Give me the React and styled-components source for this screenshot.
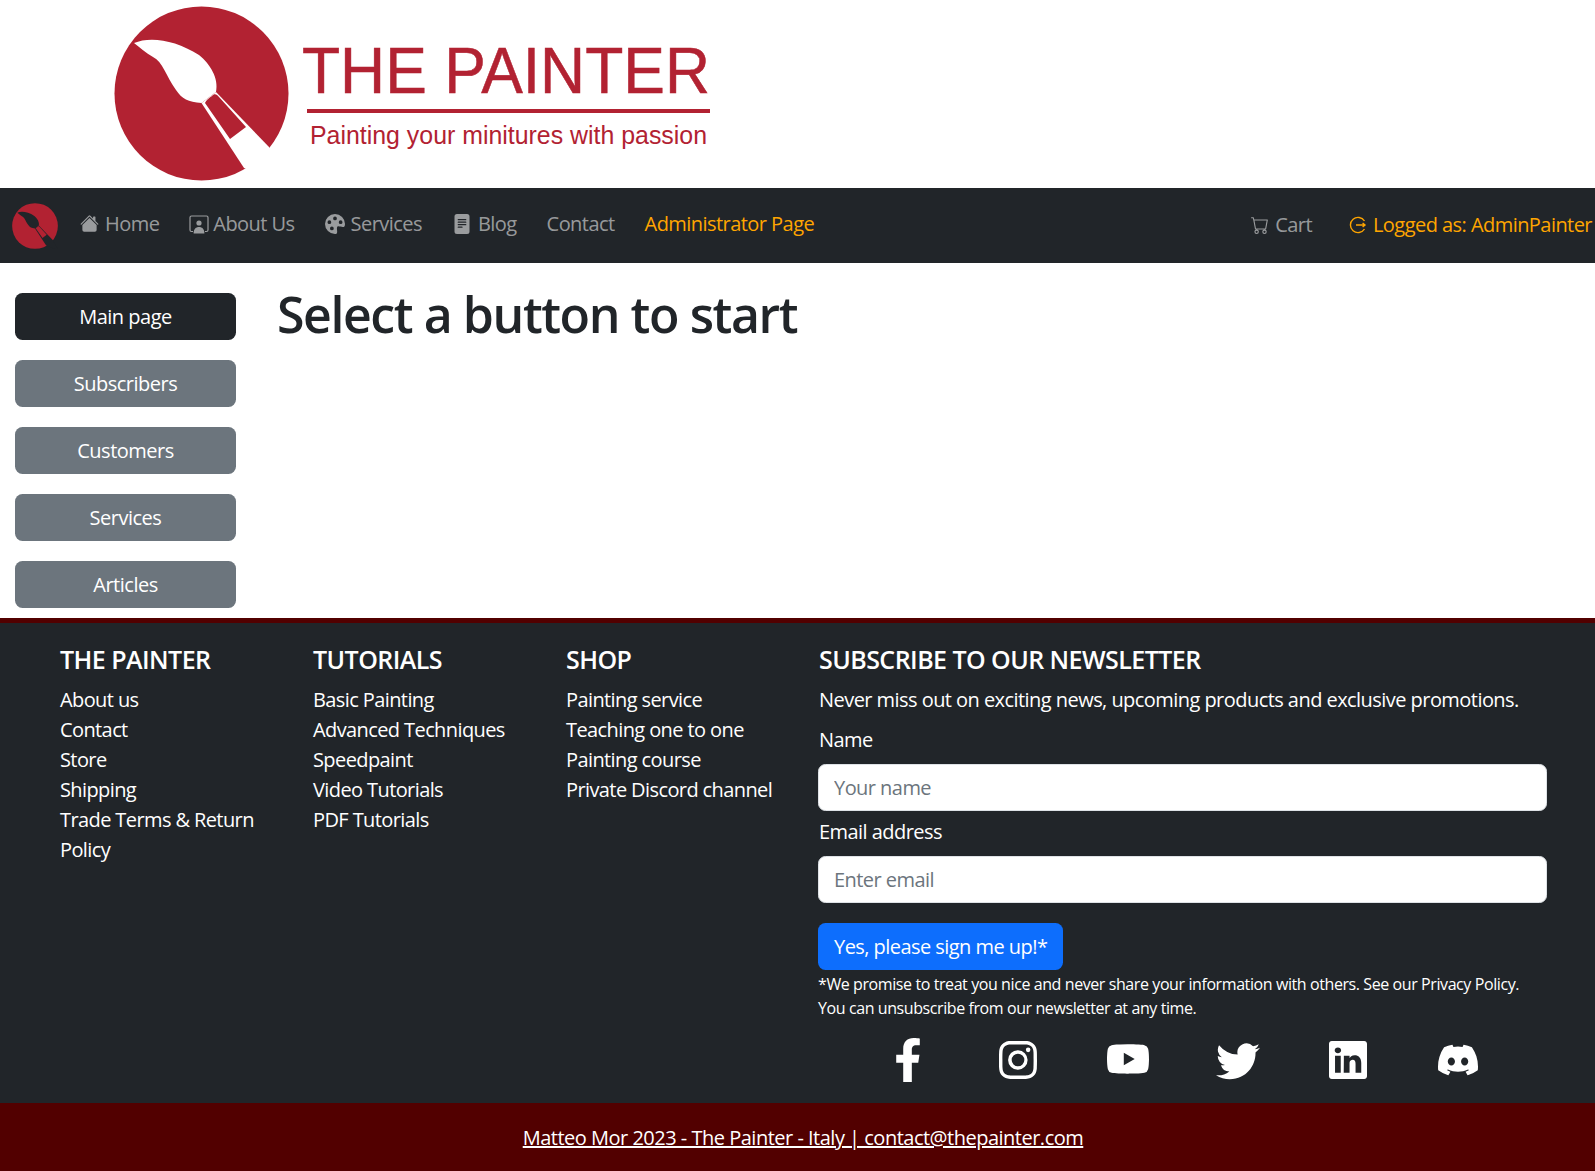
import styled, { createGlobalStyle } from "styled-components"
import { BsHouseFill, BsPaletteFill, BsFileTextFill, BsCart, BsInstagram, BsYoutube, BsTwitter, BsLinkedin, BsDiscord } from "react-icons/bs"
import { FaFacebookF } from "react-icons/fa"

const GlobalStyle = createGlobalStyle`
  html, body {
    margin: 0;
    padding: 0;
    background: #fff;
    font-family: "Open Sans", "Noto Sans", sans-serif;
    font-size: 20px;
    line-height: 1.5;
    color: #212529;
  }
  * {
    box-sizing: border-box;
  }
`
const Banner = styled.header`
  height: 188px;
  padding-left: 114px;
  display: flex;
  align-items: flex-start;
`
const LogoArt = styled.svg`
  display: block;
  width: 640px;
  height: 188px;
`
const EmblemArt = styled.svg`
  display: block;
  width: 46px;
  height: 46px;
  flex: none;
`
const NavBar = styled.nav`
  height: 75px;
  background: #212529;
  display: flex;
  align-items: center;
  padding-left: 12px;
`
const NavList = styled.div`
  display: flex;
  align-items: center;
  margin-left: 7px;
  padding-bottom: 4px;
  letter-spacing: -0.55px;
`
const NavLink = styled.a`
  display: flex;
  align-items: center;
  gap: ${props => props.$gap || 6}px;
  padding: 0 15px;
  color: ${props => (props.$accent ? "#ffa500" : "rgba(255, 255, 255, 0.55)")};
  white-space: nowrap;
  svg {
    flex: none;
  }
`
const NavRight = styled(NavList)`
  margin-left: auto;
  margin-right: -12px;
  padding-bottom: 1px;
  gap: 7px;
`
const Content = styled.main`
  display: flex;
  padding: 30px 0 10px 15px;
  gap: 41px;
`
const SideMenu = styled.aside`
  width: 221px;
  display: flex;
  flex-direction: column;
  gap: 20px;
`
const SideButton = styled.button`
  height: 47px;
  border: 0;
  border-radius: 7.5px;
  background: ${props => (props.$active ? "#212529" : "#6c757d")};
  color: #fff;
  font: inherit;
  letter-spacing: -0.5px;
`
const Title = styled.h1`
  margin: -9px 0 0;
  font-size: 50px;
  font-weight: 600;
  line-height: 60px;
  letter-spacing: -1.42px;
`
const Footer = styled.footer`
  background: #212529;
  border-top: 5px solid #520000;
  height: 485px;
  padding: 21px 48px 0 60px;
  display: grid;
  grid-template-columns: 253px 253px 253px 1fr;
  color: #fff;
  letter-spacing: -0.55px;
`
const ColTitle = styled.h5`
  margin: 0 0 11px;
  font-size: 25px;
  font-weight: 600;
  line-height: 30px;
  letter-spacing: -0.55px;
`
const LinkList = styled.div`
  display: flex;
  flex-direction: column;
  padding-right: 50px;
  letter-spacing: -0.6px;
  a {
    color: #fff;
  }
  &.wide {
    padding-right: 0;
    white-space: nowrap;
  }
`
const Lead = styled.p`
  margin: 0 0 10px;
  white-space: nowrap;
`
const FieldLabel = styled.label`
  display: block;
  margin-bottom: 9px;
`
const Field = styled.input`
  display: block;
  width: 729px;
  height: 47px;
  padding: 0 15px;
  margin: 0 0 ${props => props.$mb}px -1px;
  border: 1px solid #dee2e6;
  border-radius: 7.5px;
  background: #fff;
  font: inherit;
  letter-spacing: -0.55px;
  &::placeholder {
    color: #6c757d;
    opacity: 1;
  }
`
const SubmitButton = styled.button`
  display: block;
  height: 47px;
  margin-left: -1px;
  padding: 0 16px;
  border: 0;
  border-radius: 7.5px;
  background: #0d6efd;
  color: #fff;
  font: inherit;
  letter-spacing: -0.55px;
`
const Fineprint = styled.p`
  margin: 2px 0 0 -1px;
  font-size: 16px;
  line-height: 24px;
  letter-spacing: -0.41px;
  white-space: nowrap;
`
const SocialRow = styled.div`
  margin-top: 17px;
  padding-left: 34px;
  display: grid;
  grid-template-columns: repeat(6, 110px);
  justify-items: center;
  align-items: center;
  height: 46px;
  color: #fff;
`
const BottomBar = styled.div`
  height: 68px;
  background: #520000;
  display: flex;
  align-items: center;
  justify-content: center;
  padding: 2px 0 0 11px;
  letter-spacing: -0.5px;
  a {
    color: #fff;
    text-decoration: underline;
  }
`

// emblem coordinates are in banner pixels
const Emblem = ({ brush }) => (
  <>
    <circle cx="201.5" cy="93.5" r="87" fill="#b22232" />
    <path fill={brush} d="M134 43C150 36 176 40 199 55C210 64 219 78 216 92L201.5 103C188 102 182 99 176 90C166 76 163 62 153 57C146 53 139 47 134 43Z" />
    <path fill={brush} d="M216 92L269 147L290 185L244 168L201.5 103Z" />
    <path fill="#b22232" d="M212 96C214 93 217 94 219 97L246 127L230 139L205 103C206 100 209 98 212 96Z" />
  </>
)

const Logo = () => (
  <LogoArt viewBox="114 0 640 188">
    <Emblem brush="#fff" />
    <text x="302" y="93" fill="#b22232" stroke="#b22232" strokeWidth="0.5" fontFamily="Liberation Sans" fontSize="65" textLength="408" lengthAdjust="spacingAndGlyphs">THE PAINTER</text>
    <rect x="307" y="109" width="403" height="4" fill="#b22232" />
    <text x="310" y="144" fill="#b22232" fontFamily="Liberation Sans" fontSize="25" textLength="397" lengthAdjust="spacingAndGlyphs">Painting your minitures with passion</text>
  </LogoArt>
)

const LogoutGlyph = () => (
  <svg width="18" height="18" viewBox="0 0 18 18" fill="none" stroke="currentColor" strokeWidth="1.4">
    <path d="M15.5 5A7.6 7.6 0 1 0 15.5 13" />
    <path d="M7 9H16M13.6 7L16 9L13.6 11" />
  </svg>
)

const PersonFrameGlyph = () => (
  <svg width="20" height="20" viewBox="0 0 20 20" fill="none">
    <path stroke="currentColor" strokeWidth="1.2" d="M4 17.5H2.5A1.5 1.5 0 0 1 1 16V3.5A1.5 1.5 0 0 1 2.5 2H17.5A1.5 1.5 0 0 1 19 3.5V16A1.5 1.5 0 0 1 17.5 17.5H16" />
    <circle cx="10" cy="9" r="2.6" fill="currentColor" />
    <path fill="currentColor" d="M4.6 19.5C4.6 15 7 13 10 13S15.4 15 15.4 19.5Z" />
  </svg>
)

const App = () => {
  return (
    <>
      <GlobalStyle />
      <Banner>
        <Logo />
      </Banner>
      <NavBar>
        <EmblemArt viewBox="114 6 175 175">
          <Emblem brush="#212529" />
        </EmblemArt>
        <NavList>
          <NavLink><BsHouseFill size={19} />Home</NavLink>
          <NavLink $gap={4}><PersonFrameGlyph />About Us</NavLink>
          <NavLink><BsPaletteFill size={20} />Services</NavLink>
          <NavLink><BsFileTextFill size={20} />Blog</NavLink>
          <NavLink>Contact</NavLink>
          <NavLink $accent>Administrator Page</NavLink>
        </NavList>
        <NavRight>
          <NavLink><BsCart size={18} />Cart</NavLink>
          <NavLink $accent><LogoutGlyph />Logged as: AdminPainter</NavLink>
        </NavRight>
      </NavBar>
      <Content>
        <SideMenu>
          <SideButton $active>Main page</SideButton>
          <SideButton>Subscribers</SideButton>
          <SideButton>Customers</SideButton>
          <SideButton>Services</SideButton>
          <SideButton>Articles</SideButton>
        </SideMenu>
        <Title>Select a button to start</Title>
      </Content>
      <Footer>
        <div>
          <ColTitle>THE PAINTER</ColTitle>
          <LinkList>
            <a>About us</a>
            <a>Contact</a>
            <a>Store</a>
            <a>Shipping</a>
            <a>Trade Terms &amp; Return Policy</a>
          </LinkList>
        </div>
        <div>
          <ColTitle>TUTORIALS</ColTitle>
          <LinkList className="wide">
            <a>Basic Painting</a>
            <a>Advanced Techniques</a>
            <a>Speedpaint</a>
            <a>Video Tutorials</a>
            <a>PDF Tutorials</a>
          </LinkList>
        </div>
        <div>
          <ColTitle>SHOP</ColTitle>
          <LinkList className="wide">
            <a>Painting service</a>
            <a>Teaching one to one</a>
            <a>Painting course</a>
            <a>Private Discord channel</a>
          </LinkList>
        </div>
        <div>
          <ColTitle>SUBSCRIBE TO OUR NEWSLETTER</ColTitle>
          <Lead>Never miss out on exciting news, upcoming products and exclusive promotions.</Lead>
          <FieldLabel>Name</FieldLabel>
          <Field placeholder="Your name" $mb={6} />
          <FieldLabel>Email address</FieldLabel>
          <Field placeholder="Enter email" $mb={20} />
          <SubmitButton>Yes, please sign me up!*</SubmitButton>
          <Fineprint>*We promise to treat you nice and never share your information with others. See our Privacy Policy.<br />You can unsubscribe from our newsletter at any time.</Fineprint>
          <SocialRow>
            <FaFacebookF size={44} />
            <BsInstagram size={38} />
            <BsYoutube size={42} />
            <BsTwitter size={44} />
            <BsLinkedin size={38} />
            <BsDiscord size={40} />
          </SocialRow>
        </div>
      </Footer>
      <BottomBar>
        <a>Matteo Mor 2023 - The Painter - Italy | contact@thepainter.com</a>
      </BottomBar>
    </>
  )
}

export default App
